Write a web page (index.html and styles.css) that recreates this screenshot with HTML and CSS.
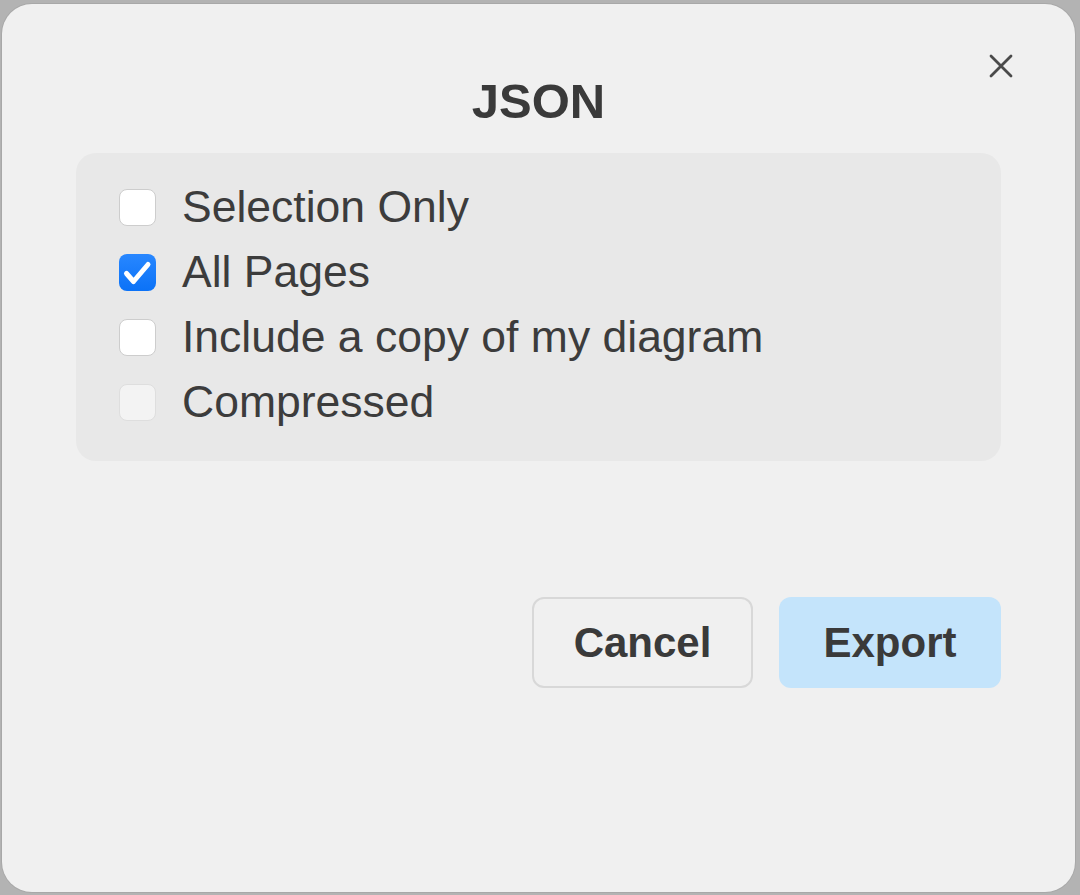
FILE: index.html
```html
<!DOCTYPE html>
<html lang="en">
<head>
<meta charset="utf-8">
<title>JSON</title>
<link rel="stylesheet" href="styles.css">
</head>
<body>
<div class="dialog">
  <button class="close" aria-label="Close">
    <svg width="28" height="28" viewBox="0 0 28 28"><path d="M4 4 L24 24 M24 4 L4 24" stroke="#4a4a4a" stroke-width="2.8" stroke-linecap="round" fill="none"/></svg>
  </button>
  <h1 class="title">JSON</h1>
  <div class="panel">
    <label class="row"><span class="box"></span><span class="label">Selection Only</span></label>
    <label class="row"><span class="box checked"><svg width="37" height="37" viewBox="0 0 37 37"><path d="M7.5 19.5 L14.5 27.5 L29 10.5" stroke="#fff" stroke-width="5" stroke-linecap="round" stroke-linejoin="round" fill="none"/></svg></span><span class="label">All Pages</span></label>
    <label class="row"><span class="box"></span><span class="label">Include a copy of my diagram</span></label>
    <label class="row"><span class="box disabled"></span><span class="label">Compressed</span></label>
  </div>
  <div class="actions">
    <button class="btn cancel">Cancel</button>
    <button class="btn export">Export</button>
  </div>
</div>
</body>
</html>
```
FILE: styles.css
```css
html, body {
  margin: 0;
  padding: 0;
}
body {
  width: 1080px;
  height: 895px;
  background: #b3b3b3;
  font-family: "Liberation Sans", Arial, sans-serif;
  color: #3c3c3c;
  overflow: hidden;
}
.dialog {
  position: relative;
  box-sizing: border-box;
  margin: 4px 0 0 2px;
  width: 1073px;
  height: 888px;
  background: #f0f0f0;
  border-radius: 30px;
  padding: 67px 74px 0 74px;
  box-shadow: 0 0 0 1px rgba(0,0,0,0.06);
}
.close {
  position: absolute;
  top: 48px;
  right: 60px;
  width: 28px;
  height: 28px;
  padding: 0;
  border: 0;
  background: none;
  display: flex;
}
.title {
  margin: 0;
  height: 60px;
  line-height: 60px;
  text-align: center;
  font-size: 49px;
  font-weight: bold;
  color: #3a3a3a;
}
.panel {
  margin-top: 22px;
  background: #e8e8e8;
  border-radius: 20px;
  padding: 22px 43px 26px 43px;
  display: flex;
  flex-direction: column;
}
.row {
  height: 65px;
  display: flex;
  align-items: center;
  gap: 26px;
}
.box {
  box-sizing: border-box;
  width: 37px;
  height: 37px;
  border-radius: 8px;
  background: #ffffff;
  border: 1px solid #cdcdcd;
  flex: none;
  display: flex;
}
.box.checked {
  border: 0;
  background: linear-gradient(#2887ff, #0b72f7);
}
.box.disabled {
  background: #f3f3f3;
  border-color: #dedede;
}
.label {
  font-size: 44.5px;
  line-height: 63px;
  padding-bottom: 2px;
  color: #3c3c3c;
}
.actions {
  margin-top: 136px;
  display: flex;
  justify-content: flex-end;
  gap: 26px;
}
.btn {
  box-sizing: border-box;
  width: 221px;
  height: 91px;
  border-radius: 12px;
  font-family: "Liberation Sans", Arial, sans-serif;
  font-size: 42px;
  font-weight: bold;
  color: #3a3a3a;
  padding: 0;
}
.cancel {
  background: #f0f0f0;
  border: 2px solid #d8d8d8;
}
.export {
  width: 222px;
  background: #c4e4fb;
  border: 0;
}
```
